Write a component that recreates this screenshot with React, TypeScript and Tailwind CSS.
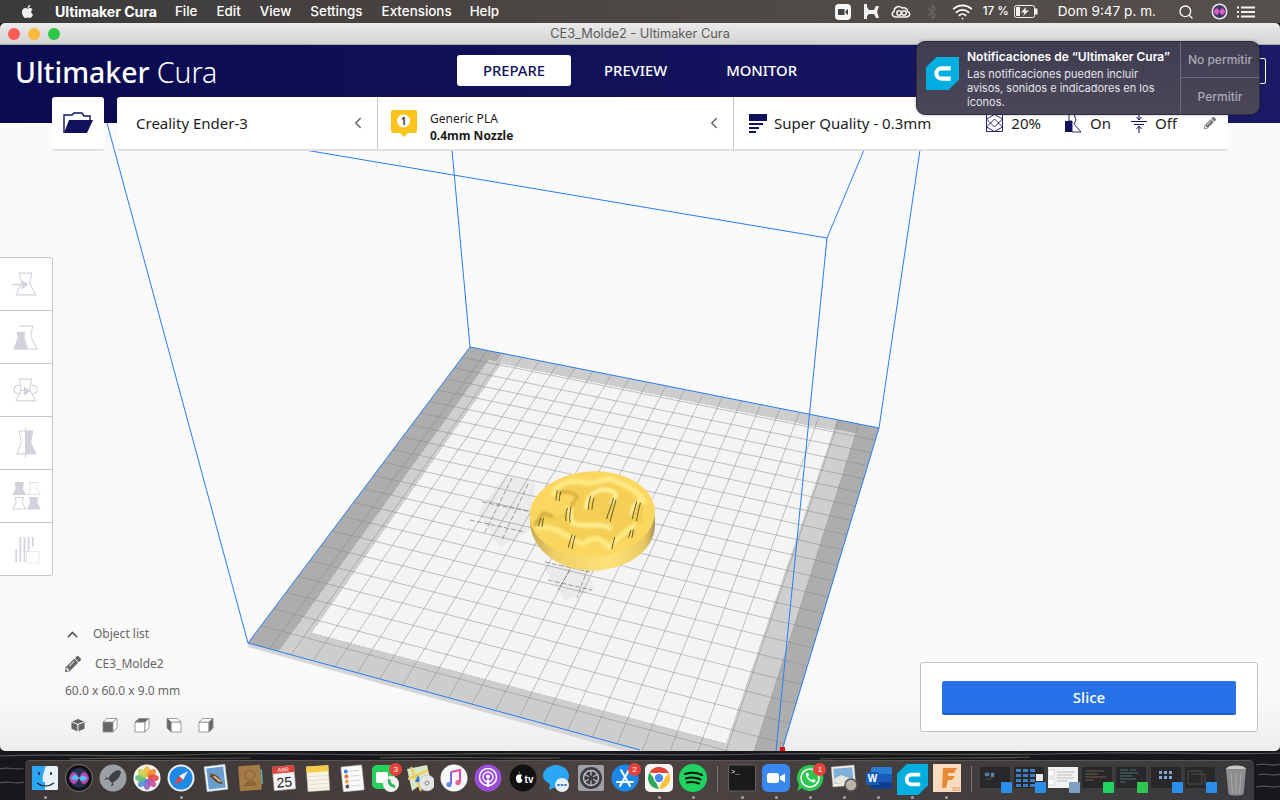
import React from 'react';
import { Bluetooth, ChevronLeft, ChevronUp, Search, Wifi } from 'lucide-react';
import { FaApple, FaPencilAlt } from 'react-icons/fa';

// corners of the build plate on screen: back-left, back-right, front-right, front-left
const Q = [[470, 347], [879, 428], [771.6, 786], [248, 643]];

const makeProject = () => {
  const [p0, p1, p2, p3] = Q;
  const dx1 = p1[0] - p2[0], dx2 = p3[0] - p2[0], sx = p0[0] - p1[0] + p2[0] - p3[0];
  const dy1 = p1[1] - p2[1], dy2 = p3[1] - p2[1], sy = p0[1] - p1[1] + p2[1] - p3[1];
  const den = dx1 * dy2 - dx2 * dy1;
  const g = (sx * dy2 - dx2 * sy) / den;
  const h = (dx1 * sy - sx * dy1) / den;
  const a = p1[0] - p0[0] + g * p1[0], b = p3[0] - p0[0] + h * p3[0];
  const d = p1[1] - p0[1] + g * p1[1], e = p3[1] - p0[1] + h * p3[1];
  return (u: number, v: number) => {
    const w = g * u + h * v + 1;
    return [(a * u + b * v + p0[0]) / w, (d * u + e * v + p0[1]) / w];
  };
};
const project = makeProject();

const quad = (u0: number, v0: number, u1: number, v1: number) =>
  [[u0, v0], [u1, v0], [u1, v1], [u0, v1]].map(([u, v]) => project(u, v).map((n) => n.toFixed(1)).join(',')).join(' ');

const CELLS = Array.from({ length: 23 }, (_, i) => i / 22);

const Disc = () => (
  <g transform="translate(460 450) scale(0.3333)">
    <defs>
      <linearGradient id="side" x1="0" x2="1" y1="0" y2="0">
        <stop offset="0" stopColor="#c4aa58" />
        <stop offset="0.2" stopColor="#f0cf66" />
        <stop offset="0.65" stopColor="#fde27a" />
        <stop offset="0.92" stopColor="#e8c860" />
        <stop offset="1" stopColor="#a8935a" />
      </linearGradient>
      <filter id="soft">
        <feGaussianBlur stdDeviation="2.5" />
      </filter>
    </defs>
    <path d="M210 215 C212 300 300 362 395 362 C500 362 585 300 585 225 L585 200 L210 200Z" fill="url(#side)" />
    <ellipse cx="397" cy="192" rx="188" ry="128" fill="#fbd75f" transform="rotate(-3 397 192)" />
    <path d="M285 125 C300 90 345 85 385 98 C420 102 435 70 470 92 C505 104 540 125 552 155 L548 215 C530 230 515 245 505 265 C480 270 465 295 450 300 C430 265 405 250 375 285 C340 280 325 240 290 232 L240 240 L225 220 L250 185 L275 195 L330 190 C335 165 345 155 350 135 Z" fill="#f2c94c" opacity="0.6" />
    <g fill="none" strokeLinecap="round" strokeLinejoin="round" filter="url(#soft)">
      <path d="M280 132 C298 92 345 88 385 100 C420 104 432 74 470 96 C505 108 535 125 552 155" stroke="#fee985" strokeWidth="16" />
      <path d="M378 172 C385 128 420 108 462 126 C472 136 466 150 456 156" stroke="#ffee96" strokeWidth="13" />
      <path d="M330 172 C335 200 325 212 345 222 C380 234 420 215 450 234" stroke="#ffec90" strokeWidth="15" />
      <path d="M235 232 C300 226 330 272 370 282 C400 256 420 260 447 292 C472 266 490 252 522 226" stroke="#fee883" strokeWidth="16" />
      <path d="M514 192 C520 162 530 150 548 150" stroke="#ffee96" strokeWidth="10" />
      <path d="M226 224 L250 190 L274 198" stroke="#d3ae3f" strokeWidth="12" />
      <path d="M300 128 C320 122 340 130 352 140 C340 160 335 165 332 168" stroke="#dcb440" strokeWidth="11" />
    </g>
    <g fill="none" stroke="#5f5630" strokeWidth="3" strokeLinecap="round">
      <path d="M292 122 C290 132 288 140 288 150 M302 126 C300 135 298 142 298 152" />
      <path d="M392 138 C388 152 385 165 385 178 M402 145 C398 158 396 168 396 178" />
      <path d="M322 175 C318 190 316 200 318 212 M333 172 C330 190 328 200 330 216" />
      <path d="M460 145 C455 170 445 185 440 206 M468 150 C462 175 454 195 451 214" />
      <path d="M530 155 C525 175 520 190 517 206 M541 160 C536 178 532 195 530 212" />
      <path d="M336 255 C332 268 328 280 325 292 M345 258 C342 270 338 285 336 296" />
      <path d="M464 262 C460 275 458 285 456 296" />
      <path d="M512 242 L506 262 M520 240 L516 262" />
      <path d="M242 205 L236 228 M250 205 L246 230" />
    </g>
  </g>
);

const Viewport = () => (
  <svg className="absolute inset-0 w-full h-full" viewBox="0 123 1280 628">
    <defs>
      <linearGradient id="fade" x1="0" x2="0" y1="0" y2="1">
        <stop offset="0.9" stopColor="#fafafa" />
        <stop offset="1" stopColor="#eeeeee" />
      </linearGradient>
    </defs>
    <rect x="0" y="123" width="1280" height="628" fill="url(#fade)" />
    <polygon points="248,643 248,647 640,755 780,790 772,786" fill="#d6d6d6" />
    <g shapeRendering="crispEdges">
      <polygon points={quad(0, 0, 1, 1)} fill="#f4f4f4" />
      <polygon points={quad(0, 0, 1, 0.04)} fill="#cdcdcd" />
      <polygon points={quad(0, 0.94, 1, 1)} fill="#cdcdcd" />
      <polygon points={quad(0, 0, 0.1, 1)} fill="#cfcfcf" />
      <polygon points={quad(0.905, 0, 1, 1)} fill="#cfcfcf" />
      <polygon points={quad(0, 0, 0.065, 1)} fill="#adadad" />
      <polygon points={quad(0.955, 0, 1, 1)} fill="#adadad" />
      <polygon points={quad(0, 0, 0.085, 0.035)} fill="#adadad" />
      <polygon points={quad(0.905, 0, 1, 0.035)} fill="#adadad" />
    </g>
    <g stroke="#8a8a8a" strokeOpacity="0.5" strokeWidth="1">
      {CELLS.map((t) => {
        const [a, b] = [project(t, 0), project(t, 1)];
        const [c, d] = [project(0, t), project(1, t)];
        return (
          <g key={t}>
            {t > 0 && t < 1 && <line x1={a[0]} y1={a[1]} x2={b[0]} y2={b[1]} />}
            {t > 0 && t < 1 && <line x1={c[0]} y1={c[1]} x2={d[0]} y2={d[1]} />}
          </g>
        );
      })}
    </g>
    {/* model shadow on the plate */}
    <g>
      <polygon points="478,512 505,475 535,482 530,530 500,548" fill="#000" opacity="0.035" />
      <polygon points="542,565 585,565 595,590 565,600" fill="#000" opacity="0.04" />
      <g stroke="#555" strokeOpacity="0.55" strokeWidth="1" fill="none" strokeDasharray="5 2">
        <path d="M512 478 L484 534 M528 484 L502 540 M482 502 L532 512 M470 520 L525 532" />
        <path d="M545 562 L590 572 M590 562 L577 598 M570 570 L558 590 M548 580 L592 590" />
      </g>
    </g>
    <g stroke="#2a7bf5" strokeWidth="1" fill="none">
      <path d="M107 123 L248 643 L640 750" />
      <path d="M452 150 L470 347 L879 428 L920 150" />
      <path d="M305 150 L827 238 L864 150" />
      <path d="M827 238 L776 751" />
      <path d="M248 643 L470 347" />
      <path d="M879 428 L783 747" />
    </g>
    <rect x="780" y="747" width="5" height="4" fill="#f00000" />
    <Disc />
  </svg>
);

const VASE = 'M5 25 L10 14 L8 4 H20 L18 14 L24 25 Z';

const ToolIcon = ({ kind }: { kind: number }) => {
  const c = '#d2d2dd';
  return (
    <svg width="30" height="30" viewBox="0 0 29 29" fill="none" stroke={c} strokeWidth="1">
      {kind === 0 && (
        <>
          <path d={VASE} />
          <path d="M1 15 H12" strokeWidth="1.4" />
          <path d="M11 11.5 L16 15 L11 18.5Z" fill={c} />
        </>
      )}
      {kind === 1 && (
        <>
          <path d="M8 4 H21 L19 14 L25 26 H5" />
          <path d="M3 26 L7 15 L6 10 H13 L12.5 15 L16 26Z" fill={c} />
        </>
      )}
      {kind === 2 && (
        <>
          <path d={VASE} />
          <path d="M9 10 C1 10 1 18 9 18 M20 10 C27 10 27 18 20 18" />
          <path d="M9 15 H14" />
          <path d="M13 12 L18 15.5 L13 19Z" fill={c} />
        </>
      )}
      {kind === 3 && (
        <>
          <path d="M14 3 H8 L10 14 L6 25 H14" />
          <path d="M14 3 H21 L19 14 L24 25 H14Z" fill={c} />
          <path d="M14 0 V29" />
        </>
      )}
      {kind === 4 && (
        <>
          <path d="M2 13 L5 7.5 L4 1.5 H12 L11 7.5 L14 13Z" fill={c} />
          <path d="M16 13 L19 7.5 L18 1.5 H26 L25 7.5 L28 13Z" strokeDasharray="1.5 1" />
          <path d="M2 27 L5 21 L4 16 H12 L11 21 L14 27Z" />
          <path d="M16 27 L19 21 L18 16 H26 L25 21 L28 27Z" fill={c} />
        </>
      )}
      {kind === 5 && (
        <>
          <path d="M5 27 L5 15 M9 27 V3 M13 27 V3 M17 20 V3 M21 12 V3" strokeWidth="1.6" />
          <rect x="15" y="17" width="12" height="11" strokeDasharray="1.5 1.5" fill="#fff" />
        </>
      )}
    </svg>
  );
};

const ViewCube = ({ kind }: { kind: number }) => {
  const c = '#666666';
  const top = 'M8 1.5 L15 4.5 L8 7.5 L1 4.5Z';
  const left = 'M1 4.5 L8 7.5 V15 L1 12Z';
  const right = 'M8 7.5 L15 4.5 V12 L8 15Z';
  if (kind === 0) {
    return (
      <svg width="16" height="16" viewBox="0 0 16 16" fill={c} stroke="#fff" strokeWidth="0.8">
        <path d={top} /><path d={left} /><path d={right} />
      </svg>
    );
  }
  const box = {
    1: { front: 'M1 5 H11 V15 H1Z', t: 'M1 5 L5 1.5 H15 L11 5Z', s: 'M11 5 L15 1.5 V11 L11 15Z', fill: 'front' },
    2: { front: 'M1 5 H11 V15 H1Z', t: 'M1 5 L5 1.5 H15 L11 5Z', s: 'M11 5 L15 1.5 V11 L11 15Z', fill: 'top' },
    3: { front: 'M5 5 H15 V15 H5Z', t: 'M1 1.5 H11 L15 5 H5Z', s: 'M1 1.5 L5 5 V15 L1 11Z', fill: 'side' },
    4: { front: 'M1 5 H11 V15 H1Z', t: 'M1 5 L5 1.5 H15 L11 5Z', s: 'M11 5 L15 1.5 V11 L11 15Z', fill: 'side' },
  }[kind]!;
  return (
    <svg width="16" height="16" viewBox="0 0 16 16" stroke="#888" strokeWidth="0.8" fill="#fff">
      <path d={box.front} fill={box.fill === 'front' ? c : '#fff'} />
      <path d={box.t} fill={box.fill === 'top' ? c : '#fff'} />
      <path d={box.s} fill={box.fill === 'side' ? c : '#fff'} />
    </svg>
  );
};

const CuraLogo = ({ size }: { size: number }) => (
  <svg width={size} height={size} viewBox="0 0 32 32">
    <path d="M10 0 H32 V22 L22 32 H0 V10Z" fill="#00aee0" />
    <path d="M24 11 H15 A5 5 0 0 0 15 21 H24" fill="none" stroke="#fff" strokeWidth="4" />
  </svg>
);

const Badge = ({ n }: { n: number }) => (
  <span className="absolute -top-[1px] -right-[2px] w-[13px] h-[13px] rounded-full bg-[#e8413c] text-white text-[8px] leading-[13px] text-center font-['Liberation_Sans',sans-serif]">
    {n}
  </span>
);

const Ico = ({ children, badge }: { children: React.ReactNode; badge?: number }) => (
  <div className="relative w-[28px] h-[28px]">
    <svg width="28" height="28" viewBox="0 0 28 28">{children}</svg>
    {badge ? <Badge n={badge} /> : null}
  </div>
);

const petals = ['#f4b63f', '#f0862f', '#e6483f', '#c94a9a', '#8f5bc2', '#4d8fd6', '#5bbd72', '#c4d24a'];

const DOCK_ICONS: Record<string, React.ReactNode> = {
  finder: (
    <>
      <rect x="1" y="2" width="26" height="24" rx="1.5" fill="#e8f0f8" />
      <path d="M1 3.5 A1.5 1.5 0 0 1 2.5 2 H15 C12 9 11 15 12 18 H14 V26 H2.5 A1.5 1.5 0 0 1 1 24.5Z" fill="#2aa6f2" />
      <path d="M8 8 V11 M20 8 V11" stroke="#14233c" strokeWidth="1.6" />
      <path d="M6 19 C11 23 18 23 23 19" stroke="#14233c" strokeWidth="1.2" fill="none" />
    </>
  ),
  siri: (
    <>
      <circle cx="14" cy="14" r="13.5" fill="#111" stroke="#999" strokeWidth="0.7" />
      <circle cx="14" cy="14" r="10" fill="#26304f" />
      <path d="M4 14 C7 6 11 6 14 14 C17 22 21 22 24 14 C21 6 17 6 14 14 C11 22 7 22 4 14Z" fill="#c94bc0" opacity="0.9" />
      <path d="M6 14 C9 10 11 10 14 14 C17 18 19 18 22 14 C19 11 17 11 14 14 C11 17 9 17 6 14Z" fill="#46c6e8" />
    </>
  ),
  launchpad: (
    <>
      <circle cx="14" cy="14" r="13.5" fill="#9aa0a4" />
      <path d="M20 6 C14 7 11 11 9 15 L13 19 C17 17 21 14 22 8Z M9 15 L5 16 L8 13Z M13 19 L12 23 L15 20Z" fill="#3c4145" />
    </>
  ),
  photos: (
    <>
      <circle cx="14" cy="14" r="13.5" fill="#f5f5f5" />
      {petals.map((c, i) => (
        <ellipse key={c} cx="14" cy="7.5" rx="3.4" ry="5.4" fill={c} opacity="0.88" transform={`rotate(${i * 45} 14 14)`} />
      ))}
    </>
  ),
  safari: (
    <>
      <circle cx="14" cy="14" r="13.5" fill="#e8eef4" />
      <circle cx="14" cy="14" r="11.5" fill="#1e8ae6" />
      <path d="M21 7 L12 12 L16 16Z" fill="#f4f4f4" />
      <path d="M7 21 L12 12 L16 16Z" fill="#e8413c" />
    </>
  ),
  mail: (
    <g transform="rotate(-7 14 14)">
      <rect x="3.5" y="1.5" width="21" height="25" fill="#f4f8fa" stroke="#9db4c8" strokeWidth="0.6" />
      <rect x="5.5" y="3.5" width="17" height="21" fill="#6b9ed0" />
      <path d="M9 9 C13 9 18 13 20 21 C15 20 13 18 12 16 L8 12Z" fill="#6e4f30" />
      <path d="M12 12 L18 18" stroke="#e3d8c4" strokeWidth="1.5" />
    </g>
  ),
  contacts: (
    <g transform="rotate(-4 14 14)">
      <rect x="3" y="1.5" width="22" height="25" rx="1.5" fill="#a57b45" />
      <rect x="25" y="6" width="1.5" height="15" fill="#5fb0a4" />
      <circle cx="14" cy="11" r="5" fill="none" stroke="#8a6535" strokeWidth="1.2" />
      <path d="M7 22 C9 15 19 15 21 22Z" fill="#8a6535" />
    </g>
  ),
  calendar: (
    <g transform="rotate(-5 14 14)">
      <rect x="3" y="2" width="22" height="24" fill="#f4f4f4" stroke="#6a6a6a" strokeWidth="0.6" />
      <rect x="3" y="2" width="22" height="7" fill="#d9413a" />
      <text x="14" y="7.6" fontSize="5.5" fill="#fff" textAnchor="middle" fontFamily="Liberation Sans, sans-serif">ABR</text>
      <text x="14" y="23" fontSize="14" fill="#222" textAnchor="middle" fontFamily="Liberation Sans, sans-serif">25</text>
    </g>
  ),
  notes: (
    <g transform="rotate(-4 14 14)">
      <rect x="3" y="2" width="22" height="25" fill="#f6f3e4" stroke="#a8a48c" strokeWidth="0.5" />
      <rect x="3" y="2" width="22" height="6" fill="#f3cc48" />
      <path d="M4 12 H24 M4 16 H24 M4 20 H24 M4 24 H24" stroke="#d8d6c8" strokeWidth="0.6" />
    </g>
  ),
  reminders: (
    <g transform="rotate(-6 14 14)">
      <rect x="4" y="2" width="21" height="25" rx="1" fill="#fafafa" stroke="#bbb" strokeWidth="0.5" />
      <circle cx="8.5" cy="7" r="2" fill="#3f86e0" />
      <circle cx="8.5" cy="12" r="2" fill="#ee6a35" />
      <circle cx="8.5" cy="17" r="2" fill="#e8a13c" />
      <circle cx="8.5" cy="22" r="2" fill="#555" />
      <path d="M12 7 H22 M12 12 H22 M12 17 H22 M12 22 H22" stroke="#ccc" strokeWidth="0.8" />
    </g>
  ),
  facetime: (
    <>
      <rect x="0" y="1" width="23" height="24" rx="5" fill="#27cf5d" />
      <rect x="4" y="8" width="12" height="11" rx="2" fill="#fff" />
      <circle cx="19" cy="20" r="8" fill="#f0f0f0" />
      <path d="M16 15 C15 20 18 23 23 24 L23 21 L20 20 L19 18 L18 15Z" fill="#27b857" />
    </>
  ),
  maps: (
    <>
      <path d="M1 5 L21 1 L24 14 L6 27Z" fill="#d8e8c4" />
      <path d="M5 3 L15 27 M2 15 L22 6" stroke="#f3cb54" strokeWidth="2" />
      <path d="M12 11 L15 18 H9Z" fill="#2f79d8" />
      <circle cx="21" cy="19" r="8" fill="#e2e4e6" stroke="#aaa" strokeWidth="0.5" />
      <circle cx="21" cy="19" r="2" fill="none" stroke="#888" />
    </>
  ),
  music: (
    <>
      <circle cx="14" cy="14" r="13.5" fill="#f7f7f7" />
      <path d="M11 8 L20 6 V18" stroke="#d84fb0" strokeWidth="2" fill="none" />
      <path d="M11 8 V20" stroke="#7e66e0" strokeWidth="2" />
      <circle cx="9" cy="20.5" r="2.6" fill="#5f8ae8" />
      <circle cx="18" cy="18.5" r="2.6" fill="#ef5f96" />
    </>
  ),
  podcasts: (
    <>
      <circle cx="14" cy="14" r="13.5" fill="#9a4ed8" />
      <circle cx="14" cy="13" r="8.5" fill="none" stroke="#fff" strokeWidth="1.5" />
      <circle cx="14" cy="13" r="5" fill="none" stroke="#fff" strokeWidth="1.3" />
      <circle cx="14" cy="12.5" r="2" fill="#fff" />
      <rect x="12.8" y="15" width="2.4" height="8" rx="1.2" fill="#fff" />
    </>
  ),
  tv: (
    <>
      <circle cx="14" cy="14" r="13.5" fill="#111" />
      <path d="M9.5 9 C10 8 11 8 11 7.5 C11 8.5 10.5 9 9.5 9 M7 14 C7 11 9 10 10 10.5 C11 10 12.5 10 13 11.5 C11.5 12.5 11.5 15 13.5 16 C13 18 11.5 19.5 10 19 C9 19.5 7 18 7 14Z" fill="#fff" />
      <text x="20" y="18.5" fontSize="10" fontWeight="700" fill="#fff" textAnchor="middle" fontFamily="Liberation Sans, sans-serif">tv</text>
    </>
  ),
  messages: (
    <>
      <path d="M13 1 C20 1 26 6 26 12 C26 18 20 23 13 23 L6 26 L7 20 C3 18 0 15 0 12 C0 6 6 1 13 1Z" fill="#2aa6f5" />
      <circle cx="19" cy="21" r="7" fill="#e8f0f8" />
      <path d="M15 21 h1 M18.5 21 h1 M22 21 h1" stroke="#2a76d8" strokeWidth="1.8" strokeLinecap="round" />
    </>
  ),
  prefs: (
    <>
      <rect x="1" y="1" width="26" height="26" rx="2" fill="#9ea2a6" />
      <circle cx="14" cy="14" r="11" fill="#3c3e42" />
      <circle cx="14" cy="14" r="7.5" fill="none" stroke="#c0c2c4" strokeWidth="1.4" />
      <path d="M14 6.5 V21.5 M7 10 L21 18 M21 10 L7 18" stroke="#c0c2c4" strokeWidth="1.2" />
      <circle cx="14" cy="14" r="2.6" fill="#3c3e42" />
    </>
  ),
  appstore: (
    <>
      <circle cx="14" cy="14" r="13.5" fill="#1b87e8" />
      <path d="M10 6 L19 22 M18 6 L9 22 M6 18 H22" stroke="#fff" strokeWidth="2" strokeLinecap="round" />
    </>
  ),
  chrome: (
    <>
      <rect x="0" y="0" width="28" height="28" rx="5" fill="#f6f6f6" />
      <path d="M14 3 A11 11 0 0 1 24 9 H14Z M4.5 8.5 A11 11 0 0 1 14 3 V9 H9Z" fill="#e24436" />
      <path d="M24 9 A11 11 0 0 1 14 25 L18 16Z" fill="#f8c33a" />
      <path d="M14 25 A11 11 0 0 1 4.5 8.5 L10 16Z" fill="#2fa855" />
      <circle cx="14" cy="14" r="5.4" fill="#fff" />
      <circle cx="14" cy="14" r="4.2" fill="#4a8af0" />
    </>
  ),
  spotify: (
    <>
      <circle cx="14" cy="14" r="14" fill="#1ed35f" />
      <path d="M6 10 C12 8 18 8.5 23 11 M7 14.5 C12 13 17 13.5 21.5 15.5 M8 18.5 C12 17.5 16 18 20 19.5" stroke="#111" strokeWidth="2" strokeLinecap="round" fill="none" />
    </>
  ),
  terminal: (
    <>
      <rect x="0.5" y="1" width="27" height="26" rx="2" fill="#1b1b1b" stroke="#777" strokeWidth="0.7" />
      <text x="3" y="10" fontSize="7" fill="#eee" fontFamily="Liberation Mono, monospace">&gt;_</text>
    </>
  ),
  zoom: (
    <>
      <rect x="0" y="0" width="28" height="28" rx="6" fill="#3a87f2" />
      <rect x="5" y="9" width="12" height="10" rx="2.5" fill="#fff" />
      <path d="M18 12.5 L23 9.5 V18.5 L18 15.5Z" fill="#fff" />
    </>
  ),
  whatsapp: (
    <>
      <path d="M14 1 A13 13 0 1 1 6 24 L1 27 L3 21 A13 13 0 0 1 14 1Z" fill="#2dc650" />
      <circle cx="14" cy="14" r="9" fill="none" stroke="#fff" strokeWidth="1.6" />
      <path d="M10 9 C9 13 14 19 19 18.5 L19.5 16 L17 15 L15.5 16 C14 15.5 12.5 14 12 12.5 L13 11 L12 9Z" fill="#fff" />
    </>
  ),
  preview: (
    <>
      <rect x="1" y="2" width="23" height="20" fill="#f3ece0" stroke="#aaa" strokeWidth="0.4" transform="rotate(-5 12 12)" />
      <rect x="3" y="4" width="19" height="15" fill="#7fb0dc" transform="rotate(-5 12 12)" />
      <path d="M3 15 L10 11 L21 15 V19 H4Z" fill="#e8e4dc" />
      <circle cx="20" cy="21" r="6" fill="#b9b4aa" stroke="#555" strokeWidth="1.6" />
    </>
  ),
  word: (
    <>
      <rect x="6" y="3" width="21" height="22" rx="1.5" fill="#2b7cd3" />
      <rect x="6" y="10" width="21" height="8" fill="#185abd" />
      <rect x="6" y="18" width="21" height="7" fill="#103f91" />
      <rect x="1" y="8" width="13" height="13" rx="1" fill="#1a5bb8" />
      <text x="7.5" y="18" fontSize="10" fontWeight="700" fill="#fff" textAnchor="middle" fontFamily="Liberation Sans, sans-serif">W</text>
    </>
  ),
  fusion: (
    <>
      <rect x="-2" y="-1" width="32" height="30" fill="#f9dcc0" />
      <path d="M10 4 H24 L21 9 H15 V12 H22 L19 16 H15 L13 24 H9Z" fill="#e88a35" />
      <text x="23" y="27" fontSize="5" fill="#d08040" textAnchor="middle" fontFamily="Liberation Sans, sans-serif">360</text>
    </>
  ),
};

const Slot = ({ dot, children }: { dot?: boolean; children: React.ReactNode }) => (
  <div className="relative w-[34.12px] h-[40px] flex items-start justify-center pt-[3px]">
    {children}
    {dot && <span className="absolute bottom-[2px] left-1/2 -ml-[1.5px] w-[3px] h-[3px] rounded-full bg-[#a8a8a8]" />}
  </div>
);

// small thumbnail of a minimized window with its app badge
const MiniWindow = ({ kind, badge }: { kind: number; badge: string }) => (
  <Slot>
    <div className="relative w-[32px] h-[29px]">
      <svg width="30" height="21" viewBox="0 0 30 21" className="absolute left-0 top-[3px]">
        <rect width="30" height="21" fill={kind === 2 ? '#f2f2f2' : '#28282a'} />
        {kind === 0 && <path d="M5 6 H9 V9 H5Z M11 6 H14 V10 H11Z M5 12 H12" stroke="#666" fill="#4a8ac8" strokeWidth="0.6" />}
        {kind === 1 && (
          <g fill="#3f7fc8">
            {[2, 7, 12, 17].map((y) => (
              <g key={y}>
                <rect x="2" y={y} width="5" height="3" />
                <rect x="9" y={y} width="5" height="3" />
                <rect x="16" y={y} width="5" height="3" />
              </g>
            ))}
            <rect x="22" y="7" width="7" height="7" fill="#e8e8e8" />
          </g>
        )}
        {kind === 2 && (
          <g>
            <rect x="0" y="3" width="6" height="6" fill="#fff" stroke="#aaa" strokeWidth="0.4" />
            <rect x="0" y="12" width="6" height="6" fill="#fff" stroke="#aaa" strokeWidth="0.4" />
            <path d="M9 5 H26 M9 8 H24 M9 11 H26 M9 14 H20" stroke="#999" strokeWidth="0.6" />
          </g>
        )}
        {kind === 3 && <path d="M3 4 H22 M3 7 H16 M3 10 H24 M3 13 H12" stroke="#6a5a4a" strokeWidth="1" />}
        {kind === 4 && (
          <path d="M4 3 H12 M4 6 H22 M4 9 H16 M4 12 H20 M4 15 H10 M14 3 H20" stroke="#4f7a80" strokeWidth="0.9" />
        )}
        {kind === 5 && (
          <g fill="#7fa8d0">
            <rect x="8" y="4" width="3" height="3" /><rect x="13" y="4" width="3" height="3" /><rect x="18" y="4" width="3" height="3" />
            <rect x="8" y="9" width="3" height="3" /><rect x="13" y="9" width="3" height="3" /><rect x="18" y="9" width="3" height="3" />
          </g>
        )}
        {kind === 6 && <path d="M3 4 H17 V17 H3Z M6 7 H20 V19" fill="none" stroke="#555" strokeWidth="0.8" />}
      </svg>
      <div className="absolute right-0 bottom-0 w-[11px] h-[11px] rounded-[1px]" style={{ background: badge }} />
    </div>
  </Slot>
);

const Sep = () => (
  <div className="w-[15px] h-[40px] flex items-start justify-center pt-[5px]">
    <div className="w-px h-[26px] bg-[#77777a]" />
  </div>
);

const Dock = () => (
  <div className="absolute left-[25px] top-[9px] w-[1229px] h-[41px] rounded-t-[5px] bg-gradient-to-r from-[#3d3837] via-[#4c4341] to-[#39393d] flex pl-[3px] border-t border-[#5a5452]">
    <Slot dot><Ico>{DOCK_ICONS.finder}</Ico></Slot>
    <Slot><Ico>{DOCK_ICONS.siri}</Ico></Slot>
    <Slot><Ico>{DOCK_ICONS.launchpad}</Ico></Slot>
    <Slot><Ico>{DOCK_ICONS.photos}</Ico></Slot>
    <Slot dot><Ico>{DOCK_ICONS.safari}</Ico></Slot>
    <Slot><Ico>{DOCK_ICONS.mail}</Ico></Slot>
    <Slot><Ico>{DOCK_ICONS.contacts}</Ico></Slot>
    <Slot><Ico>{DOCK_ICONS.calendar}</Ico></Slot>
    <Slot><Ico>{DOCK_ICONS.notes}</Ico></Slot>
    <Slot><Ico>{DOCK_ICONS.reminders}</Ico></Slot>
    <Slot><Ico badge={3}>{DOCK_ICONS.facetime}</Ico></Slot>
    <Slot><Ico>{DOCK_ICONS.maps}</Ico></Slot>
    <Slot><Ico>{DOCK_ICONS.music}</Ico></Slot>
    <Slot><Ico>{DOCK_ICONS.podcasts}</Ico></Slot>
    <Slot><Ico>{DOCK_ICONS.tv}</Ico></Slot>
    <Slot><Ico>{DOCK_ICONS.messages}</Ico></Slot>
    <Slot><Ico>{DOCK_ICONS.prefs}</Ico></Slot>
    <Slot><Ico badge={2}>{DOCK_ICONS.appstore}</Ico></Slot>
    <Slot dot><Ico>{DOCK_ICONS.chrome}</Ico></Slot>
    <Slot dot><Ico>{DOCK_ICONS.spotify}</Ico></Slot>
    <Sep />
    <Slot dot><Ico>{DOCK_ICONS.terminal}</Ico></Slot>
    <Slot dot><Ico>{DOCK_ICONS.zoom}</Ico></Slot>
    <Slot dot><Ico badge={1}>{DOCK_ICONS.whatsapp}</Ico></Slot>
    <Slot dot><Ico>{DOCK_ICONS.preview}</Ico></Slot>
    <Slot dot><Ico>{DOCK_ICONS.word}</Ico></Slot>
    <Slot dot><CuraLogo size={31} /></Slot>
    <Slot dot><Ico>{DOCK_ICONS.fusion}</Ico></Slot>
    <Sep />
    <MiniWindow kind={0} badge="#2a8fe8" />
    <MiniWindow kind={1} badge="#2a8fe8" />
    <MiniWindow kind={2} badge="#7fa0c0" />
    <MiniWindow kind={3} badge="#1ed35f" />
    <MiniWindow kind={4} badge="#2dc650" />
    <MiniWindow kind={5} badge="#2a8fe8" />
    <MiniWindow kind={6} badge="#2a8fe8" />
    <div className="w-[36px] flex justify-center pt-[4px]">
      <svg width="22" height="31" viewBox="0 0 22 31">
        <ellipse cx="11" cy="4" rx="10" ry="3.5" fill="#c9c9c9" />
        <path d="M1 4 L3.5 29 C6 31 16 31 18.5 29 L21 4Z" fill="#8d8d8f" />
        <path d="M6 8 L7.5 28 M11 8 V29 M16 8 L14.5 28" stroke="#b4b4b6" strokeWidth="0.8" />
      </svg>
    </div>
  </div>
);

const Wallpaper = () => (
  <svg className="absolute inset-0 w-full h-full" viewBox="0 0 1280 49" preserveAspectRatio="none">
    <rect width="1280" height="49" fill="#17181c" />
    <g stroke="#6d6762" strokeWidth="1.2" fill="none" opacity="0.75">
      <path d="M0 5 C60 2 120 7 210 3 C300 1 360 6 460 3 C560 1 640 6 760 3 C860 1 960 6 1100 2 C1180 1 1230 4 1280 2" />
      <path d="M70 8 C130 6 190 8 250 7 M380 7 C440 5 500 8 560 7 M820 8 C890 6 960 8 1030 6" />
      <path d="M1256 14 C1265 11 1272 16 1280 13 M1258 24 C1266 21 1272 26 1280 23 M1256 36 C1266 33 1272 38 1280 35 M0 18 C8 15 16 20 24 17 M0 32 C8 29 16 34 24 31" />
    </g>
  </svg>
);

const MenuBar = () => (
  <div className="relative h-[23px] shrink-0 bg-gradient-to-r from-[#3b3b3b] via-[#4e4844] to-[#55504c] flex items-center text-white text-[13.4px] font-['Inter','Liberation_Sans',sans-serif] font-medium">
    <FaApple className="ml-[20px] text-[#f2f2f2]" size={15} />
    <span className="ml-[20px] font-bold text-[14.2px] tracking-[-0.1px]">Ultimaker Cura</span>
    <span className="ml-[18px]">File</span>
    <span className="ml-[19px]">Edit</span>
    <span className="ml-[19px]">View</span>
    <span className="ml-[19px]">Settings</span>
    <span className="ml-[19px]">Extensions</span>
    <span className="ml-[18px]">Help</span>
    <div className="ml-auto flex items-center">
      <svg width="16" height="16" viewBox="0 0 16 16" className="mr-[12px]">
        <rect width="16" height="16" rx="4" fill="#f5f5f5" />
        <path d="M3 5 H9.5 V11 H3Z M10.5 7 L13 5 V11 L10.5 9Z" fill="#444" />
      </svg>
      <svg width="17" height="17" viewBox="0 0 17 17" className="mr-[11px]" fill="#f2f2f2">
        <path d="M1 1 H4 V4 L6 7 H11 L13 3 H16 L14 8.5 L16 15 H13 L11 11 H6 L4 13 V16 H1Z" />
      </svg>
      <svg width="20" height="15" viewBox="0 0 20 15" className="mr-[13px]" fill="none" stroke="#f2f2f2" strokeWidth="1.5">
        <path d="M5 13 C1 13 0 9 3 7.5 C3 3 8 1 11 4 C15 3 17 6 16.5 7.5 C20 9 19 13 15 13Z" />
        <circle cx="8" cy="9" r="2.2" />
        <circle cx="13" cy="9" r="2.2" />
      </svg>
      <Bluetooth className="mr-[12px] text-[#6c6764]" size={16} />
      <Wifi className="mr-[10px]" size={21} />
      <span className="mr-[5px] text-[11.6px]">17 %</span>
      <svg width="24" height="13" viewBox="0 0 24 13" className="mr-[20px]" fill="none" stroke="#f2f2f2">
        <rect x="0.5" y="0.5" width="20" height="12" rx="2" />
        <rect x="21.5" y="4" width="1.5" height="5" fill="#f2f2f2" />
        <rect x="2" y="2" width="4" height="9" fill="#f2f2f2" stroke="none" />
        <path d="M12 2 L7 7.5 H10.5 L9 11 L15 5.5 H11.5Z" fill="#f2f2f2" stroke="none" />
      </svg>
      <span className="mr-[22px] text-[13.6px] font-normal">Dom 9:47 p. m.</span>
      <Search className="mr-[17px]" size={16} />
      <svg width="17" height="17" viewBox="0 0 17 17" className="mr-[9px]">
        <circle cx="8.5" cy="8.5" r="8" fill="#e8e8f0" />
        <circle cx="8.5" cy="8.5" r="6.5" fill="#3a3a62" />
        <path d="M2.5 8.5 C5 4 7 4 8.5 8.5 C10 13 12 13 14.5 8.5 C12 4 10 4 8.5 8.5 C7 13 5 13 2.5 8.5Z" fill="#d95bc4" />
      </svg>
      <svg width="18" height="12" viewBox="0 0 18 12" className="mr-[25px]" fill="#f2f2f2">
        <rect x="0" y="0.5" width="2" height="2" /><rect x="4" y="0.5" width="14" height="2" />
        <rect x="0" y="5" width="2" height="2" /><rect x="4" y="5" width="14" height="2" />
        <rect x="0" y="9.5" width="2" height="2" /><rect x="4" y="9.5" width="14" height="2" />
      </svg>
    </div>
  </div>
);

const TitleBar = () => (
  <div className="relative h-[22px] shrink-0 rounded-t-[5px] bg-gradient-to-b from-[#ebebeb] to-[#d3d3d3] border-b border-[#ababab] flex items-center justify-center">
    <div className="absolute left-[8px] top-[5px] flex gap-[8px]">
      <span className="w-[12px] h-[12px] rounded-full bg-[#fc5a55]" />
      <span className="w-[12px] h-[12px] rounded-full bg-[#fdb840]" />
      <span className="w-[12px] h-[12px] rounded-full bg-[#2fc748]" />
    </div>
    <span className="text-[12.8px] text-[#5b5b5b] font-['Inter','Liberation_Sans',sans-serif]">CE3_Molde2 - Ultimaker Cura</span>
  </div>
);

const Header = () => (
  <div className="relative h-[78px] shrink-0 bg-gradient-to-r from-[#0a0a50] to-[#1a1a66] flex items-start font-['Noto_Sans',sans-serif] text-white">
    <div className="ml-[15px] mt-[5px] text-[28.4px] leading-[44px]">
      <span className="font-medium">Ultimaker</span> <span className="font-light">Cura</span>
    </div>
    <div className="absolute left-[457px] top-[10px] flex items-center text-[14.8px] font-medium">
      <div className="w-[114px] h-[31px] rounded-[3px] bg-white text-[#10105c] flex items-center justify-center">PREPARE</div>
      <div className="ml-[33px]">PREVIEW</div>
      <div className="ml-[59px]">MONITOR</div>
    </div>
    <div className="absolute left-[1180px] top-[13px] w-[86px] h-[26px] rounded-[2px] border border-white" />
  </div>
);

const Toolbar = () => (
  <div className="absolute left-[52px] top-[52px] w-[1176px] flex items-stretch h-[54px] font-['Noto_Sans',sans-serif] text-[#1c1c1c]">
    <div className="w-[52px] bg-white rounded-[3px] border-b-[2px] border-[#e0e0e0] flex items-center justify-center">
      <svg width="31" height="22" viewBox="0 0 31 22">
        <path d="M1 21 V3 H9 L11 1 H19 L21 4 H27 V8" fill="none" stroke="#12125c" strokeWidth="1.4" />
        <path d="M1 21 L6 8 H30 L24 21Z" fill="#12125c" />
      </svg>
    </div>
    <div className="ml-[13px] flex-1 bg-white rounded-[3px] border-b-[2px] border-[#e0e0e0] flex">
      <div className="w-[261px] pl-[19px] pr-[10px] flex items-center justify-between border-r border-[#c8c8c8]">
        <span className="text-[15px]">Creality Ender-3</span>
        <ChevronLeft className="text-[#666]" size={18} />
      </div>
      <div className="w-[356px] pl-[13px] pr-[10px] flex items-center border-r border-[#c8c8c8]">
        <svg width="26" height="27" viewBox="0 0 26 27" className="mr-[13px]">
          <path d="M2 0 H24 A2 2 0 0 1 26 2 V21 A2 2 0 0 1 24 23 H17 L13 27 L9 23 H2 A2 2 0 0 1 0 21 V2 A2 2 0 0 1 2 0Z" fill="#fcc41d" />
          <circle cx="12.5" cy="11" r="6.5" fill="#fff" />
          <text x="12.5" y="14.5" fontSize="10" fontWeight="600" fill="#222" textAnchor="middle" fontFamily="Noto Sans, sans-serif">1</text>
        </svg>
        <div className="flex flex-col text-[12px] leading-[17px] pt-[7px]">
          <span>Generic PLA</span>
          <span className="font-bold">0.4mm Nozzle</span>
        </div>
        <ChevronLeft className="ml-auto text-[#666]" size={18} />
      </div>
      <div className="flex-1 flex items-center pl-[15px] text-[15px]">
        <svg width="18" height="20" viewBox="0 0 18 20" className="mr-[7px]" fill="#12125c">
          <rect x="0" y="1" width="18" height="7" />
          <rect x="0" y="10" width="14" height="2" />
          <rect x="0" y="14" width="10" height="2" />
          <rect x="0" y="18" width="7" height="2" />
        </svg>
        <span>Super Quality - 0.3mm</span>
        <svg width="17" height="18" viewBox="0 0 17 18" className="ml-[55px]" fill="none" stroke="#12125c" strokeWidth="0.9">
          <rect x="0.5" y="0.5" width="16" height="17" />
          <path d="M0.5 5 L8.5 0.5 L16.5 5 L8.5 13 L0.5 5 M0.5 13 L8.5 5 L16.5 13 L8.5 17.5 L0.5 13" />
        </svg>
        <span className="ml-[8px]">20%</span>
        <svg width="18" height="20" viewBox="0 0 18 20" className="ml-[23px]" fill="#12125c">
          <path d="M1 8 H8 V19 H1Z" />
          <path d="M5 1 H10 L12 7 L10 11 L17 19 H8 V8 H5Z" fill="none" stroke="#12125c" strokeWidth="0.9" />
        </svg>
        <span className="ml-[8px]">On</span>
        <svg width="16" height="20" viewBox="0 0 16 20" className="ml-[20px]" fill="none" stroke="#12125c" strokeWidth="1">
          <path d="M0 8.5 H16 M3 11.5 H13 M8 0 V6 M5.5 4 L8 7 L10.5 4 M8 20 V14 M5.5 16 L8 13 L10.5 16" />
        </svg>
        <span className="ml-[8px]">Off</span>
        <FaPencilAlt className="ml-[27px] text-[#777]" size={12} />
      </div>
    </div>
  </div>
);

const Notification = () => (
  <div className="absolute left-[916px] -top-[4px] w-[344px] h-[74px] rounded-[9px] bg-gradient-to-b from-[#3f3d52] to-[#4b4758] border border-[#2e2d3a] shadow-[0_0_3px_rgba(0,0,0,0.3)] flex font-['Inter','Liberation_Sans',sans-serif]">
    <div className="pl-[9px] pt-[15px]">
      <CuraLogo size={33} />
    </div>
    <div className="ml-[8px] w-[213px] pt-[7px] text-white">
      <div className="text-[12px] font-semibold leading-[16px] whitespace-nowrap">Notificaciones de “Ultimaker Cura”</div>
      <div className="mt-[2px] text-[11px] leading-[14px] text-[#e4e3ea]">
        Las notificaciones pueden incluir
        <br />avisos, sonidos e indicadores en los
        <br />íconos.
      </div>
    </div>
    <div className="ml-auto w-[79px] border-l border-[#6d6a7b] flex flex-col text-[12px] text-[#aaa8b4] font-medium">
      <div className="h-[36px] flex items-center justify-center border-b border-[#6d6a7b]">No permitir</div>
      <div className="flex-1 flex items-center justify-center pt-[2px]">Permitir</div>
    </div>
  </div>
);

const ToolPanel = () => (
  <div className="absolute left-0 top-[212px] w-[53px] bg-white border border-l-0 border-[#c6c6c6] rounded-r-[3px] flex flex-col">
    {[0, 1, 2, 3, 4, 5].map((k, i) => (
      <div key={k} className={i < 5 ? 'h-[53px] border-b border-[#c6c6c6] flex items-center justify-center' : 'h-[52px] flex items-center justify-center'}>
        <ToolIcon kind={k} />
      </div>
    ))}
  </div>
);

const ObjectList = () => (
  <div className="absolute left-[65px] top-[579px] font-['Noto_Sans',sans-serif] text-[12px] text-[#666]">
    <div className="flex items-center h-[20px]">
      <ChevronUp className="-ml-[1px] text-[#555]" size={17} strokeWidth={2} />
      <span className="ml-[12px]">Object list</span>
    </div>
    <div className="flex items-center h-[20px] mt-[10px]">
      <FaPencilAlt className="text-[#666]" size={16} />
      <span className="ml-[14px]">CE3_Molde2</span>
    </div>
    <div className="mt-[7px] h-[20px] leading-[20px]">60.0 x 60.0 x 9.0 mm</div>
    <div className="mt-[16px] flex items-center gap-[16px] ml-[5px]">
      {[0, 1, 2, 3, 4].map((k) => (
        <ViewCube key={k} kind={k} />
      ))}
    </div>
  </div>
);

const SlicePanel = () => (
  <div className="absolute left-[920px] top-[617px] w-[338px] h-[70px] bg-white border border-[#c2c2c2] rounded-[3px] flex items-center justify-center pt-[2px] font-['Noto_Sans',sans-serif]">
    <button className="w-[294px] h-[34px] rounded-[2px] bg-[#2671e8] border-b-[2px] border-[#1a5fcc] text-white text-[15px] font-medium">Slice</button>
  </div>
);

// everything that floats over the header and the 3D view; offsets start under the title bar
const Overlays = () => (
  <div className="absolute left-0 right-0 top-[22px] bottom-0">
    <Toolbar />
    <Notification />
    <ToolPanel />
    <ObjectList />
    <SlicePanel />
  </div>
);

export default function App() {
  return (
    <div className="relative w-[1280px] h-[800px] overflow-hidden bg-[#17181c] flex flex-col">
      <MenuBar />
      <div className="relative h-[728px] shrink-0 flex flex-col rounded-b-[5px] overflow-hidden z-10">
        <TitleBar />
        <Header />
        <div className="relative flex-1">
          <Viewport />
        </div>
        <Overlays />
      </div>
      <div className="relative flex-1">
        <Wallpaper />
        <Dock />
      </div>
    </div>
  );
}
